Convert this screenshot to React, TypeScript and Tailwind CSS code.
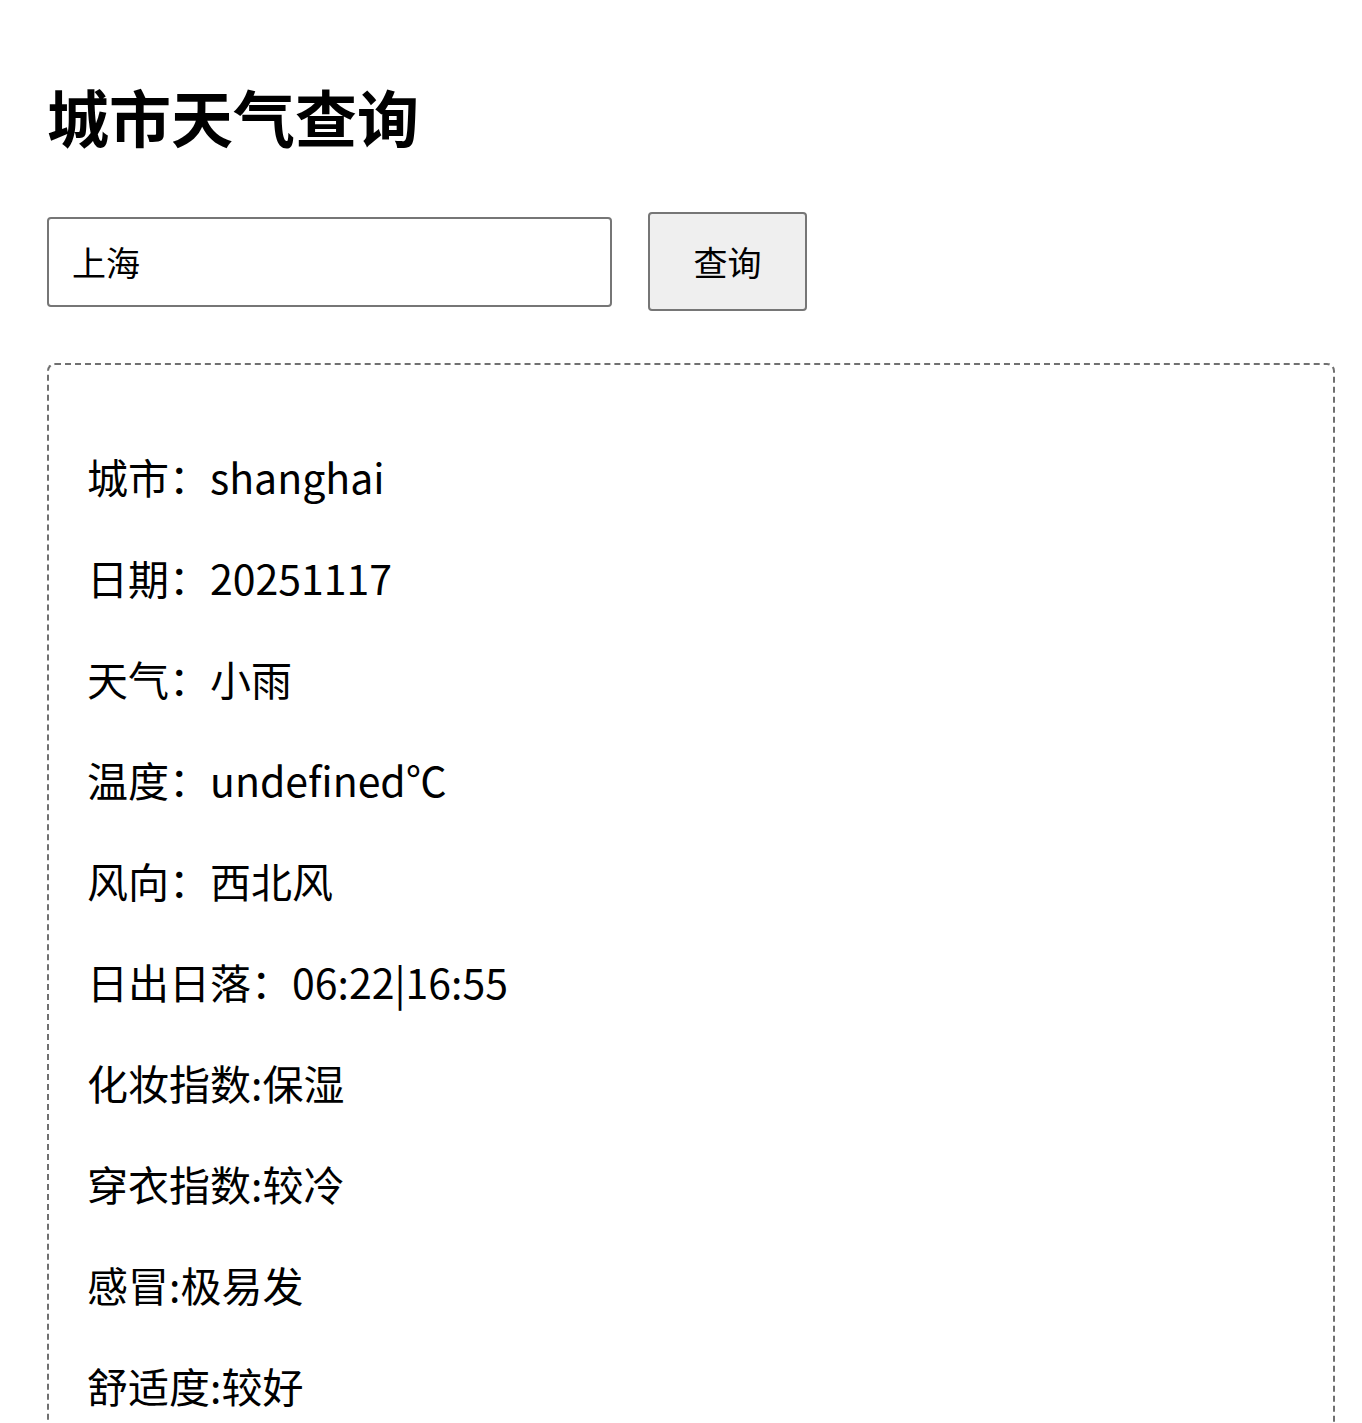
import { useState } from "react";

const rows = [
  "城市：shanghai",
  "日期：20251117",
  "天气：小雨",
  "温度：undefined℃",
  "风向：西北风",
  "日出日落：06:22|16:55",
  "化妆指数:保湿",
  "穿衣指数:较冷",
  "感冒:极易发",
  "舒适度:较好",
];

export default function App() {
  const [city, setCity] = useState("上海");

  return (
    <div
      className="min-h-screen bg-white pl-[47px] pr-[27px] pt-[71px] text-black"
      style={{ fontFamily: '"Noto Sans CJK SC", "Noto Sans", sans-serif' }}
    >
      <h1 className="text-[62px] font-bold leading-[90px]">城市天气查询</h1>

      <div className="mt-[51px] flex items-center gap-[36px]">
        <input
          value={city}
          onChange={(e) => setCity(e.target.value)}
          className="h-[90px] w-[565px] rounded-[4px] border-2 border-[#767676] px-[23px] text-[34px] outline-none"
        />
        <button className="h-[99px] w-[159px] rounded-[4px] border-2 border-[#767676] bg-[#efefef] text-[34px]">
          查询
        </button>
      </div>

      <div className="mt-[52px] rounded-[8px] border-2 border-dashed border-[#707070] px-[38px] py-[40px]">
        {rows.map((r) => (
          <p key={r} className="my-[41px] text-[41px] leading-[60px]">
            {r}
          </p>
        ))}
      </div>
    </div>
  );
}
